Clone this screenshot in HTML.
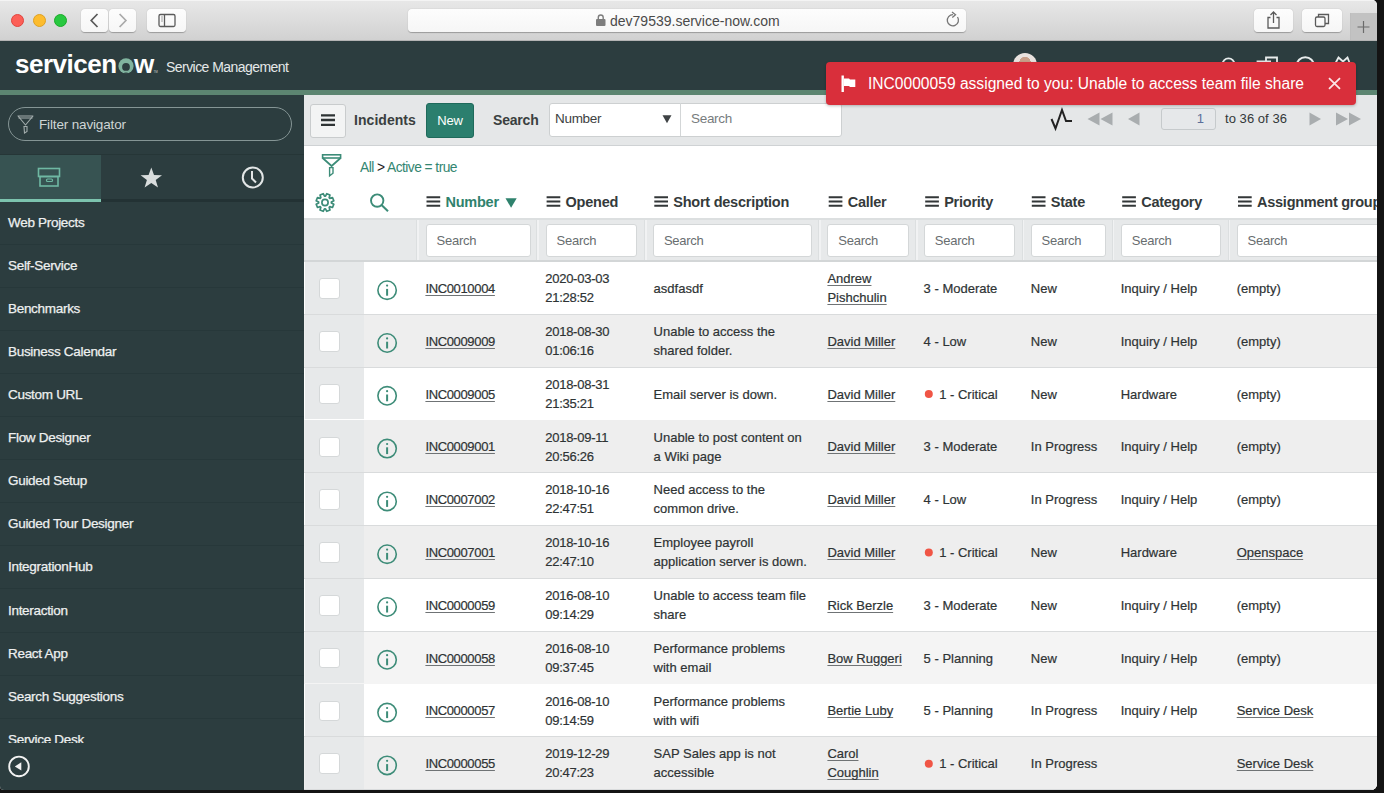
<!DOCTYPE html>
<html><head><meta charset="utf-8">
<style>
*{box-sizing:border-box;margin:0;padding:0}
html,body{width:1384px;height:793px;overflow:hidden;background:#141414;font-family:"Liberation Sans",sans-serif}
.abs{position:absolute}
svg{position:absolute;overflow:visible}
#win{position:absolute;left:0;top:0;width:1377px;height:789.5px;overflow:hidden;border-radius:0 5px 6px 4px;background:#fff}
#chrome{position:absolute;z-index:2;left:0;top:0;width:1377px;height:41px;background:linear-gradient(#e8e8e8,#d1d1d1);border-bottom:1px solid #b4b4b4;box-shadow:inset 0 1px 0 #f4f4f4}
.tl{position:absolute;top:14px;width:13px;height:13px;border-radius:50%}
.cbtn{position:absolute;top:9px;height:23px;background:linear-gradient(#fdfdfd,#f6f6f6);border-radius:4px;box-shadow:0 0.5px 1px rgba(0,0,0,.28)}
#hdr{position:absolute;left:0;top:40px;width:1377px;height:50px;background:#2c3d3f}
#hline{position:absolute;left:0;top:90px;width:1377px;height:5px;background:#5c8571}
#side{position:absolute;left:0;top:95px;width:304px;height:695px;background:#2c3d3f;overflow:hidden}
#main{position:absolute;left:304px;top:95px;width:1073px;height:695px;background:#fff;overflow:hidden}
.nav{position:absolute;left:0;width:304px;height:43px;border-bottom:1px solid #27383a;padding-left:8px;line-height:41.6px;font-size:13.5px;letter-spacing:-0.3px;color:#eef0f0;-webkit-text-stroke:0.25px #eef0f0}
</style></head><body>
<div id="win">
  <div id="chrome">
    <div class="tl" style="left:11px;background:#fc5f57;border:0.5px solid #e0443e"></div>
    <div class="tl" style="left:33px;background:#fdbc2e;border:0.5px solid #dea123"></div>
    <div class="tl" style="left:54px;background:#28c840;border:0.5px solid #1aab29"></div>
    <div class="cbtn" style="left:81px;width:27px"></div>
    <div class="cbtn" style="left:109px;width:27px"></div>
    <div class="cbtn" style="left:147px;width:39px"></div>
    <svg style="left:0;top:0" width="200" height="40">
      <path d="M97.5 14 L91.2 20.5 L97.5 27" fill="none" stroke="#585858" stroke-width="1.7"/>
      <path d="M119.6 14 L125.9 20.5 L119.6 27" fill="none" stroke="#a9a9a9" stroke-width="1.7"/>
      <rect x="159" y="14.5" width="16" height="12" rx="1.5" fill="none" stroke="#5a5a5a" stroke-width="1.3"/>
      <line x1="164.5" y1="14.5" x2="164.5" y2="26.5" stroke="#5a5a5a" stroke-width="1.3"/>
      <line x1="161" y1="17" x2="163" y2="17" stroke="#888" stroke-width="0.8"/>
      <line x1="161" y1="19" x2="163" y2="19" stroke="#888" stroke-width="0.8"/>
      <line x1="161" y1="21" x2="163" y2="21" stroke="#888" stroke-width="0.8"/>
    </svg>
    <div class="cbtn" style="left:408px;width:558px"></div>
    <svg style="left:0;top:0" width="1000" height="40">
      <rect x="596" y="19" width="9.5" height="7" rx="1" fill="#7d7d7d"/>
      <path d="M598.3 19.5 V17.5 a2.45 2.45 0 0 1 4.9 0 V19.5" fill="none" stroke="#7d7d7d" stroke-width="1.4"/>
      <path d="M957.5 17 A5.6 5.6 0 1 1 953 14.6" fill="none" stroke="#777" stroke-width="1.3"/>
      <path d="M952 12 L955.5 14.8 L952.3 17.6" fill="none" stroke="#777" stroke-width="1.3"/>
    </svg>
    <div class="abs" style="left:610px;top:13.3px;font-size:14px;line-height:17px;color:#4a4a4a;letter-spacing:0">dev79539.service-now.com</div>
    <div class="cbtn" style="left:1254px;width:39px"></div>
    <div class="cbtn" style="left:1302px;width:40px"></div>
    <div class="abs" style="left:1350px;top:13px;width:27px;height:27px;background:#c2c2c2;border-left:1px solid #bdbdbd"></div>
    <svg style="left:0;top:0" width="1384" height="40">
      <path d="M1270.5 17.5 H1268 V28 H1279 V17.5 H1276.5" fill="none" stroke="#5a5a5a" stroke-width="1.3"/>
      <path d="M1273.5 23 V12 M1270.5 15 L1273.5 12 L1276.5 15" fill="none" stroke="#5a5a5a" stroke-width="1.3"/>
      <rect x="1315.5" y="17" width="9.5" height="9.5" rx="1.5" fill="none" stroke="#5a5a5a" stroke-width="1.3"/>
      <path d="M1318.5 17 V14.5 H1328.5 V23.5 H1325" fill="none" stroke="#5a5a5a" stroke-width="1.3"/>
      <path d="M1357.5 27 H1369.5 M1363.5 21 V33" stroke="#6b6b6b" stroke-width="1.2"/>
    </svg>
  </div>
  <div id="hdr">
    <div class="abs" style="left:15px;top:9px;font-size:26px;font-weight:bold;letter-spacing:-0.5px;line-height:30px;color:#fff">servicen<span style="display:inline-block;width:17.5px"></span>w</div>
    <svg style="left:0;top:0" width="200" height="50">
      <circle cx="126" cy="25.9" r="7.6" fill="#80b49f"/><circle cx="126" cy="26.9" r="3.9" fill="#2c3d3f"/><path d="M122.6 33.8 Q126 31.2 129.4 33.8 Z" fill="#2c3d3f"/>
      <text x="153.5" y="33" font-size="3" fill="#ccc">TM</text>
    </svg>
    <div class="abs" style="left:166px;top:19.4px;font-size:14px;letter-spacing:-0.55px;line-height:17px;color:#e4e8e8">Service Management</div>
    <div class="abs" style="left:1013px;top:13px;width:24px;height:24px;border-radius:50%;background:radial-gradient(circle at 50% 40%,#c9a08a 0 30%,#e9e3df 31%)"></div>
    
    <svg style="left:0;top:0" width="1384" height="50">
      <circle cx="1228.5" cy="24.3" r="6" fill="none" stroke="#e8ecec" stroke-width="1.8"/>
      <path d="M1257.5 30 V21.5 H1271 M1266 25 V17.5 H1277 V27" fill="none" stroke="#e8ecec" stroke-width="1.8"/>
      <circle cx="1305.3" cy="26" r="8.8" fill="none" stroke="#e8ecec" stroke-width="2"/>
      <circle cx="1305.3" cy="24.5" r="2.5" fill="#e8ecec"/>
      <path d="M1335 24 L1338.5 17.5 L1343 21.5 L1347.5 17.5 L1350 24" fill="none" stroke="#e8ecec" stroke-width="1.8"/>
    </svg>
  </div>
  <div id="hline"></div>
  <div id="side">
    <div class="abs" style="left:8px;top:12px;width:284px;height:34px;border:1.2px solid #859595;border-radius:17px"></div>
    <svg style="left:0;top:0" width="304" height="60">
      <path d="M18 21 H33 L25.5 30 Z" fill="none" stroke="#a3adad" stroke-width="1.1" stroke-linejoin="round"/>
      <line x1="18.5" y1="23" x2="32.5" y2="23" stroke="#a3adad" stroke-width="1"/>
      <path d="M24 31.5 H27 V36.5 L24.5 38 Z" fill="none" stroke="#a3adad" stroke-width="1.1"/>
    </svg>
    <div class="abs" style="left:39px;top:21px;font-size:13.5px;line-height:17px;color:#cfd5d5;letter-spacing:-0.15px">Filter navigator</div>
    <div class="abs" style="left:0;top:58.5px;width:304px;height:48px;background:#2c3d3f;border-top:1px solid #263637"></div>
    <div class="abs" style="left:0;top:59.5px;width:100.5px;height:44px;background:#375352"></div>
    <div class="abs" style="left:0;top:103.5px;width:304px;height:3.5px;background:#233234"></div>
    <div class="abs" style="left:0;top:103.5px;width:100.5px;height:3.5px;background:#7cc3ae"></div>
    <svg style="left:0;top:0" width="304" height="110">
      <rect x="38.5" y="73.5" width="21" height="8" fill="none" stroke="#6fb8a3" stroke-width="1.6"/>
      <rect x="40" y="81.5" width="18" height="9.5" fill="none" stroke="#6fb8a3" stroke-width="1.6"/>
      <rect x="46.5" y="84" width="6" height="2.5" rx="1" fill="none" stroke="#6fb8a3" stroke-width="1.2"/>
      <path d="M151.3 72.5 L154 80 L162 80.3 L155.7 85.1 L158 92.5 L151.3 88 L144.6 92.5 L146.9 85.1 L140.6 80.3 L148.6 80 Z" fill="#d9dddd"/>
      <circle cx="252.8" cy="82.5" r="10" fill="none" stroke="#e2e6e6" stroke-width="2"/>
      <path d="M252 76 V83.5 L256 87.5" fill="none" stroke="#e2e6e6" stroke-width="2"/>
    </svg>
    <div class="abs" style="left:0;top:0;width:304px;height:648px;overflow:hidden">
<div class="nav" style="top:107.0px">Web Projects</div>
<div class="nav" style="top:150.1px">Self-Service</div>
<div class="nav" style="top:193.1px">Benchmarks</div>
<div class="nav" style="top:236.1px">Business Calendar</div>
<div class="nav" style="top:279.2px">Custom URL</div>
<div class="nav" style="top:322.2px">Flow Designer</div>
<div class="nav" style="top:365.3px">Guided Setup</div>
<div class="nav" style="top:408.3px">Guided Tour Designer</div>
<div class="nav" style="top:451.4px">IntegrationHub</div>
<div class="nav" style="top:494.5px">Interaction</div>
<div class="nav" style="top:537.5px">React App</div>
<div class="nav" style="top:580.5px">Search Suggestions</div>
<div class="nav" style="top:623.6px">Service Desk</div>
    </div>
    <svg style="left:0;top:0" width="304" height="695">
      <circle cx="19" cy="671.4" r="9.8" fill="none" stroke="#f2f2f2" stroke-width="1.9"/>
      <path d="M14.8 671.4 L21.3 667.3 V675.5 Z" fill="#f2f2f2"/>
    </svg>
  </div>
  <div id="main">
<div class="abs" style="left:0;top:0;width:1073px;height:51px;background:#e5e7e8;border-bottom:1px solid #cfd2d4"></div>
<div class="abs" style="left:6px;top:8.5px;width:35.5px;height:34px;background:#f3f4f4;border:1px solid #c9cccd;border-radius:3px"></div>
<svg style="left:0;top:0" width="200" height="50"><path d="M17 20.3 H31 M17 25 H31 M17 29.8 H31" stroke="#2f3435" stroke-width="2.3"/></svg>
<div class="abs" style="left:50px;top:17px;font-size:14px;font-weight:bold;line-height:16px;color:#3a3f40;letter-spacing:0.05px">Incidents</div>
<div class="abs" style="left:122px;top:8px;width:48px;height:35px;background:#2b7f6e;border:1px solid #1f6a5b;border-radius:3px;color:#fff;font-size:13px;line-height:33px;text-align:center;letter-spacing:-0.2px">New</div>
<div class="abs" style="left:189px;top:17px;font-size:14px;font-weight:bold;line-height:16px;color:#3a3f40;letter-spacing:-0.2px">Search</div>
<div class="abs" style="left:244.5px;top:7.5px;width:293px;height:34px;background:#fff;border:1px solid #cdd0d1;border-radius:3px"></div>
<div class="abs" style="left:376px;top:8px;width:1px;height:33px;background:#d3d6d7"></div>
<div class="abs" style="left:251px;top:16px;font-size:13.5px;line-height:16px;color:#3d4142;letter-spacing:-0.3px">Number</div>
<svg style="left:0;top:0" width="1073" height="50"><path d="M358.5 20.200000000000003 H367.5 L363 28.200000000000003 Z" fill="#3f4345"/></svg>
<div class="abs" style="left:387px;top:16px;font-size:13.5px;line-height:16px;color:#777c7e;letter-spacing:-0.3px">Search</div>
<svg style="left:0;top:0" width="1073" height="50">
<path d="M747.5 24 L751.5 33.5 L758 15 L762 26 H768" fill="none" stroke="#222" stroke-width="2"/>
<path d="M783.5 24 L795.5 17.5 V30.5 Z M796.5 24 L808.5 17.5 V30.5 Z" fill="#a9adaf"/>
<path d="M824 24 L835.5 17.5 V30.5 Z" fill="#a9adaf"/>
<path d="M1017 24 L1005.5 17.5 V30.5 Z" fill="#a9adaf"/>
<path d="M1044 24 L1032 17.5 V30.5 Z M1057 24 L1045 17.5 V30.5 Z" fill="#a9adaf"/>
</svg>
<div class="abs" style="left:857px;top:13px;width:55px;height:21.5px;background:#e6e8ea;border:1px solid #c6cacc;border-radius:3px;font-size:13px;line-height:19.5px;text-align:right;padding-right:11px;color:#5b6f9a">1</div>
<div class="abs" style="left:921px;top:16px;font-size:13px;line-height:16px;color:#333839;letter-spacing:0.05px">to 36 of 36</div>
<svg style="left:0;top:0" width="1073" height="200">
<rect x="18.600000000000023" y="59.80000000000001" width="18" height="3.2" fill="none" stroke="#3c8c78" stroke-width="1.6"/>
<path d="M18.600000000000023 63 L27.600000000000023 71 L36.60000000000002 63" fill="none" stroke="#3c8c78" stroke-width="1.7" stroke-linejoin="round"/>
<path d="M25.600000000000023 72.6 H29 V78.19999999999999 L25.600000000000023 80.80000000000001 Z" fill="none" stroke="#3c8c78" stroke-width="1.4"/>
</svg>
<div class="abs" style="left:56px;top:64.80000000000001px;font-size:13.8px;line-height:16px;color:#338671;letter-spacing:-0.55px;white-space:pre">All <span style="color:#222">&gt;</span> Active = true</div>
<div class="abs" style="left:0;top:123px;width:1073px;height:2px;background:#dcdfe0"></div>
<svg style="left:0;top:0" width="1073" height="200">
<polygon points="21.50,101.12 22.79,98.68 25.97,100.00 25.16,102.63 25.87,103.34 28.50,102.53 29.82,105.71 27.38,107.00 27.38,108.00 29.82,109.29 28.50,112.47 25.87,111.66 25.16,112.37 25.97,115.00 22.79,116.32 21.50,113.88 20.50,113.88 19.21,116.32 16.03,115.00 16.84,112.37 16.13,111.66 13.50,112.47 12.18,109.29 14.62,108.00 14.62,107.00 12.18,105.71 13.50,102.53 16.13,103.34 16.84,102.63 16.03,100.00 19.21,98.68 20.50,101.12" fill="none" stroke="#3c8c78" stroke-width="1.7" stroke-linejoin="round"/>
<circle cx="21" cy="107.5" r="3.1" fill="none" stroke="#3c8c78" stroke-width="1.7"/>
<circle cx="73.19999999999999" cy="105.6" r="6.2" fill="none" stroke="#3c8c78" stroke-width="1.9"/>
<line x1="77.80000000000001" y1="110.19999999999999" x2="84" y2="116.19999999999999" stroke="#3c8c78" stroke-width="2"/>
</svg>
<div class="abs" style="left:0;top:125px;width:1073px;height:41px;background:#e7e9ea"></div>
<div class="abs" style="left:0;top:165px;width:1073px;height:2px;background:#d3d6d7"></div>
<div class="abs" style="left:112px;top:125px;width:2.5px;height:40px;background:#f1f2f3;border-left:1px solid #dcdfe0"></div>
<div class="abs" style="left:121.5px;top:128.8px;width:105.0px;height:33.6px;background:#fff;border:1px solid #d4d7d8;border-radius:3px;font-size:13px;line-height:31px;padding-left:10px;color:#686d6f;letter-spacing:-0.25px">Search</div>
<div class="abs" style="left:141.5px;top:98.9px;font-size:14.5px;font-weight:bold;line-height:16px;color:#2f826d;letter-spacing:-0.25px;white-space:nowrap">Number</div>
<div class="abs" style="left:232px;top:125px;width:2.5px;height:40px;background:#f1f2f3;border-left:1px solid #dcdfe0"></div>
<div class="abs" style="left:241.60000000000002px;top:128.8px;width:91.69999999999993px;height:33.6px;background:#fff;border:1px solid #d4d7d8;border-radius:3px;font-size:13px;line-height:31px;padding-left:10px;color:#686d6f;letter-spacing:-0.25px">Search</div>
<div class="abs" style="left:261.59999999999997px;top:98.9px;font-size:14.5px;font-weight:bold;line-height:16px;color:#343a3b;letter-spacing:-0.25px;white-space:nowrap">Opened</div>
<div class="abs" style="left:340px;top:125px;width:2.5px;height:40px;background:#f1f2f3;border-left:1px solid #dcdfe0"></div>
<div class="abs" style="left:348.9px;top:128.8px;width:158.89999999999998px;height:33.6px;background:#fff;border:1px solid #d4d7d8;border-radius:3px;font-size:13px;line-height:31px;padding-left:10px;color:#686d6f;letter-spacing:-0.25px">Search</div>
<div class="abs" style="left:369.3px;top:98.9px;font-size:14.5px;font-weight:bold;line-height:16px;color:#343a3b;letter-spacing:-0.25px;white-space:nowrap">Short description</div>
<div class="abs" style="left:514.2px;top:125px;width:2.5px;height:40px;background:#f1f2f3;border-left:1px solid #dcdfe0"></div>
<div class="abs" style="left:523.3px;top:128.8px;width:81.30000000000007px;height:33.6px;background:#fff;border:1px solid #d4d7d8;border-radius:3px;font-size:13px;line-height:31px;padding-left:10px;color:#686d6f;letter-spacing:-0.25px">Search</div>
<div class="abs" style="left:543.6999999999999px;top:98.9px;font-size:14.5px;font-weight:bold;line-height:16px;color:#343a3b;letter-spacing:-0.25px;white-space:nowrap">Caller</div>
<div class="abs" style="left:611.2px;top:125px;width:2.5px;height:40px;background:#f1f2f3;border-left:1px solid #dcdfe0"></div>
<div class="abs" style="left:619.8px;top:128.8px;width:91.5px;height:33.6px;background:#fff;border:1px solid #d4d7d8;border-radius:3px;font-size:13px;line-height:31px;padding-left:10px;color:#686d6f;letter-spacing:-0.25px">Search</div>
<div class="abs" style="left:640.1999999999999px;top:98.9px;font-size:14.5px;font-weight:bold;line-height:16px;color:#343a3b;letter-spacing:-0.25px;white-space:nowrap">Priority</div>
<div class="abs" style="left:717.9px;top:125px;width:2.5px;height:40px;background:#f1f2f3;border-left:1px solid #dcdfe0"></div>
<div class="abs" style="left:726.5px;top:128.8px;width:75.0px;height:33.6px;background:#fff;border:1px solid #d4d7d8;border-radius:3px;font-size:13px;line-height:31px;padding-left:10px;color:#686d6f;letter-spacing:-0.25px">Search</div>
<div class="abs" style="left:746.8px;top:98.9px;font-size:14.5px;font-weight:bold;line-height:16px;color:#343a3b;letter-spacing:-0.25px;white-space:nowrap">State</div>
<div class="abs" style="left:807.9000000000001px;top:125px;width:2.5px;height:40px;background:#f1f2f3;border-left:1px solid #dcdfe0"></div>
<div class="abs" style="left:816.8px;top:128.8px;width:100.5px;height:33.6px;background:#fff;border:1px solid #d4d7d8;border-radius:3px;font-size:13px;line-height:31px;padding-left:10px;color:#686d6f;letter-spacing:-0.25px">Search</div>
<div class="abs" style="left:837.2px;top:98.9px;font-size:14.5px;font-weight:bold;line-height:16px;color:#343a3b;letter-spacing:-0.25px;white-space:nowrap">Category</div>
<div class="abs" style="left:923.5px;top:125px;width:2.5px;height:40px;background:#f1f2f3;border-left:1px solid #dcdfe0"></div>
<div class="abs" style="left:932.5999999999999px;top:128.8px;width:153.4000000000001px;height:33.6px;background:#fff;border:1px solid #d4d7d8;border-radius:3px;font-size:13px;line-height:31px;padding-left:10px;color:#686d6f;letter-spacing:-0.25px">Search</div>
<div class="abs" style="left:953.0px;top:98.9px;font-size:14.5px;font-weight:bold;line-height:16px;color:#343a3b;letter-spacing:-0.25px;white-space:nowrap">Assignment group</div>
<svg style="left:0;top:0" width="1073" height="200"><path d="M122.49999999999999 102.30000000000001 H136.2 M122.49999999999999 106.5 H136.2 M122.49999999999999 110.69999999999999 H136.2" stroke="#333738" stroke-width="2.1"/><path d="M242.59999999999997 102.30000000000001 H256.29999999999995 M242.59999999999997 106.5 H256.29999999999995 M242.59999999999997 110.69999999999999 H256.29999999999995" stroke="#333738" stroke-width="2.1"/><path d="M350.3 102.30000000000001 H364 M350.3 106.5 H364 M350.3 110.69999999999999 H364" stroke="#333738" stroke-width="2.1"/><path d="M524.6999999999999 102.30000000000001 H538.4 M524.6999999999999 106.5 H538.4 M524.6999999999999 110.69999999999999 H538.4" stroke="#333738" stroke-width="2.1"/><path d="M621.1999999999999 102.30000000000001 H634.9 M621.1999999999999 106.5 H634.9 M621.1999999999999 110.69999999999999 H634.9" stroke="#333738" stroke-width="2.1"/><path d="M727.8 102.30000000000001 H741.5 M727.8 106.5 H741.5 M727.8 110.69999999999999 H741.5" stroke="#333738" stroke-width="2.1"/><path d="M818.2 102.30000000000001 H831.9000000000001 M818.2 106.5 H831.9000000000001 M818.2 110.69999999999999 H831.9000000000001" stroke="#333738" stroke-width="2.1"/><path d="M934.0 102.30000000000001 H947.7 M934.0 106.5 H947.7 M934.0 110.69999999999999 H947.7" stroke="#333738" stroke-width="2.1"/><path d="M201.5 103.30000000000001 H212.70000000000005 L207.10000000000002 112.80000000000001 Z" fill="#2f826d"/></svg>
<div class="abs" style="left:0;top:167.0px;width:1073px;height:53.0px;background:#fff;border-bottom:1px solid #d9dbdc"></div>
<div class="abs" style="left:1px;top:167.0px;width:59px;height:51.8px;background:#e7e9ea"></div>
<div class="abs" style="left:15.199999999999989px;top:183.2px;width:20.6px;height:20.6px;background:#fff;border:1px solid #d5d8d9;border-radius:3px"></div>
<div class="abs" style="left:121.39999999999998px;top:185.9px;font-size:13px;line-height:16px;color:#2e3334;-webkit-text-stroke:0.2px #2e3334;letter-spacing:-0.35px;white-space:nowrap;text-decoration:underline;text-decoration-color:#6f7375;text-decoration-thickness:1px;text-underline-offset:1.6px;">INC0010004</div>
<div class="abs" style="left:241.20000000000005px;top:174.2px;font-size:13px;line-height:19px;color:#2e3334;-webkit-text-stroke:0.2px #2e3334;letter-spacing:-0.25px;white-space:nowrap;">2020-03-03<br>21:28:52</div>
<div class="abs" style="left:349.6px;top:185.9px;font-size:13px;line-height:16px;color:#2e3334;-webkit-text-stroke:0.2px #2e3334;letter-spacing:0px;white-space:nowrap;">asdfasdf</div>
<div class="abs" style="left:523.4px;top:174.2px;font-size:13px;line-height:19px;color:#2e3334;-webkit-text-stroke:0.2px #2e3334;letter-spacing:0px;white-space:nowrap;text-decoration:underline;text-decoration-color:#6f7375;text-decoration-thickness:1px;text-underline-offset:1.6px;">Andrew<br>Pishchulin</div>
<div class="abs" style="left:619.6px;top:185.9px;font-size:13px;line-height:16px;color:#2e3334;-webkit-text-stroke:0.2px #2e3334;letter-spacing:0px;white-space:nowrap;">3 - Moderate</div>
<div class="abs" style="left:726.8px;top:185.9px;font-size:13px;line-height:16px;color:#2e3334;-webkit-text-stroke:0.2px #2e3334;letter-spacing:0px;white-space:nowrap;">New</div>
<div class="abs" style="left:816.7px;top:185.9px;font-size:13px;line-height:16px;color:#2e3334;-webkit-text-stroke:0.2px #2e3334;letter-spacing:0px;white-space:nowrap;">Inquiry / Help</div>
<div class="abs" style="left:932.7px;top:185.9px;font-size:13px;line-height:16px;color:#2e3334;-webkit-text-stroke:0.2px #2e3334;letter-spacing:0px;white-space:nowrap;">(empty)</div>
<div class="abs" style="left:0;top:219.8px;width:1073px;height:53.0px;background:#eeeeee;border-bottom:1px solid #d9dbdc"></div>
<div class="abs" style="left:1px;top:219.8px;width:59px;height:51.8px;background:#e7e9ea"></div>
<div class="abs" style="left:15.199999999999989px;top:236.0px;width:20.6px;height:20.6px;background:#fff;border:1px solid #d5d8d9;border-radius:3px"></div>
<div class="abs" style="left:121.39999999999998px;top:238.7px;font-size:13px;line-height:16px;color:#2e3334;-webkit-text-stroke:0.2px #2e3334;letter-spacing:-0.35px;white-space:nowrap;text-decoration:underline;text-decoration-color:#6f7375;text-decoration-thickness:1px;text-underline-offset:1.6px;">INC0009009</div>
<div class="abs" style="left:241.20000000000005px;top:227.0px;font-size:13px;line-height:19px;color:#2e3334;-webkit-text-stroke:0.2px #2e3334;letter-spacing:-0.25px;white-space:nowrap;">2018-08-30<br>01:06:16</div>
<div class="abs" style="left:349.6px;top:227.0px;font-size:13px;line-height:19px;color:#2e3334;-webkit-text-stroke:0.2px #2e3334;letter-spacing:0px;white-space:nowrap;">Unable to access the<br>shared folder.</div>
<div class="abs" style="left:523.4px;top:238.7px;font-size:13px;line-height:16px;color:#2e3334;-webkit-text-stroke:0.2px #2e3334;letter-spacing:0px;white-space:nowrap;text-decoration:underline;text-decoration-color:#6f7375;text-decoration-thickness:1px;text-underline-offset:1.6px;">David Miller</div>
<div class="abs" style="left:619.6px;top:238.7px;font-size:13px;line-height:16px;color:#2e3334;-webkit-text-stroke:0.2px #2e3334;letter-spacing:0px;white-space:nowrap;">4 - Low</div>
<div class="abs" style="left:726.8px;top:238.7px;font-size:13px;line-height:16px;color:#2e3334;-webkit-text-stroke:0.2px #2e3334;letter-spacing:0px;white-space:nowrap;">New</div>
<div class="abs" style="left:816.7px;top:238.7px;font-size:13px;line-height:16px;color:#2e3334;-webkit-text-stroke:0.2px #2e3334;letter-spacing:0px;white-space:nowrap;">Inquiry / Help</div>
<div class="abs" style="left:932.7px;top:238.7px;font-size:13px;line-height:16px;color:#2e3334;-webkit-text-stroke:0.2px #2e3334;letter-spacing:0px;white-space:nowrap;">(empty)</div>
<div class="abs" style="left:0;top:272.6px;width:1073px;height:53.0px;background:#fff;border-bottom:1px solid #d9dbdc"></div>
<div class="abs" style="left:1px;top:272.6px;width:59px;height:51.8px;background:#e7e9ea"></div>
<div class="abs" style="left:15.199999999999989px;top:288.8px;width:20.6px;height:20.6px;background:#fff;border:1px solid #d5d8d9;border-radius:3px"></div>
<div class="abs" style="left:121.39999999999998px;top:291.5px;font-size:13px;line-height:16px;color:#2e3334;-webkit-text-stroke:0.2px #2e3334;letter-spacing:-0.35px;white-space:nowrap;text-decoration:underline;text-decoration-color:#6f7375;text-decoration-thickness:1px;text-underline-offset:1.6px;">INC0009005</div>
<div class="abs" style="left:241.20000000000005px;top:279.8px;font-size:13px;line-height:19px;color:#2e3334;-webkit-text-stroke:0.2px #2e3334;letter-spacing:-0.25px;white-space:nowrap;">2018-08-31<br>21:35:21</div>
<div class="abs" style="left:349.6px;top:291.5px;font-size:13px;line-height:16px;color:#2e3334;-webkit-text-stroke:0.2px #2e3334;letter-spacing:0px;white-space:nowrap;">Email server is down.</div>
<div class="abs" style="left:523.4px;top:291.5px;font-size:13px;line-height:16px;color:#2e3334;-webkit-text-stroke:0.2px #2e3334;letter-spacing:0px;white-space:nowrap;text-decoration:underline;text-decoration-color:#6f7375;text-decoration-thickness:1px;text-underline-offset:1.6px;">David Miller</div>
<div class="abs" style="left:635.2px;top:291.5px;font-size:13px;line-height:16px;color:#2e3334;-webkit-text-stroke:0.2px #2e3334;letter-spacing:0px;white-space:nowrap;">1 - Critical</div>
<div class="abs" style="left:726.8px;top:291.5px;font-size:13px;line-height:16px;color:#2e3334;-webkit-text-stroke:0.2px #2e3334;letter-spacing:0px;white-space:nowrap;">New</div>
<div class="abs" style="left:816.7px;top:291.5px;font-size:13px;line-height:16px;color:#2e3334;-webkit-text-stroke:0.2px #2e3334;letter-spacing:0px;white-space:nowrap;">Hardware</div>
<div class="abs" style="left:932.7px;top:291.5px;font-size:13px;line-height:16px;color:#2e3334;-webkit-text-stroke:0.2px #2e3334;letter-spacing:0px;white-space:nowrap;">(empty)</div>
<div class="abs" style="left:0;top:325.4px;width:1073px;height:53.0px;background:#eeeeee;border-bottom:1px solid #d9dbdc"></div>
<div class="abs" style="left:1px;top:325.4px;width:59px;height:51.8px;background:#e7e9ea"></div>
<div class="abs" style="left:15.199999999999989px;top:341.6px;width:20.6px;height:20.6px;background:#fff;border:1px solid #d5d8d9;border-radius:3px"></div>
<div class="abs" style="left:121.39999999999998px;top:344.3px;font-size:13px;line-height:16px;color:#2e3334;-webkit-text-stroke:0.2px #2e3334;letter-spacing:-0.35px;white-space:nowrap;text-decoration:underline;text-decoration-color:#6f7375;text-decoration-thickness:1px;text-underline-offset:1.6px;">INC0009001</div>
<div class="abs" style="left:241.20000000000005px;top:332.6px;font-size:13px;line-height:19px;color:#2e3334;-webkit-text-stroke:0.2px #2e3334;letter-spacing:-0.25px;white-space:nowrap;">2018-09-11<br>20:56:26</div>
<div class="abs" style="left:349.6px;top:332.6px;font-size:13px;line-height:19px;color:#2e3334;-webkit-text-stroke:0.2px #2e3334;letter-spacing:0px;white-space:nowrap;">Unable to post content on<br>a Wiki page</div>
<div class="abs" style="left:523.4px;top:344.3px;font-size:13px;line-height:16px;color:#2e3334;-webkit-text-stroke:0.2px #2e3334;letter-spacing:0px;white-space:nowrap;text-decoration:underline;text-decoration-color:#6f7375;text-decoration-thickness:1px;text-underline-offset:1.6px;">David Miller</div>
<div class="abs" style="left:619.6px;top:344.3px;font-size:13px;line-height:16px;color:#2e3334;-webkit-text-stroke:0.2px #2e3334;letter-spacing:0px;white-space:nowrap;">3 - Moderate</div>
<div class="abs" style="left:726.8px;top:344.3px;font-size:13px;line-height:16px;color:#2e3334;-webkit-text-stroke:0.2px #2e3334;letter-spacing:0px;white-space:nowrap;">In Progress</div>
<div class="abs" style="left:816.7px;top:344.3px;font-size:13px;line-height:16px;color:#2e3334;-webkit-text-stroke:0.2px #2e3334;letter-spacing:0px;white-space:nowrap;">Inquiry / Help</div>
<div class="abs" style="left:932.7px;top:344.3px;font-size:13px;line-height:16px;color:#2e3334;-webkit-text-stroke:0.2px #2e3334;letter-spacing:0px;white-space:nowrap;">(empty)</div>
<div class="abs" style="left:0;top:378.2px;width:1073px;height:53.0px;background:#fff;border-bottom:1px solid #d9dbdc"></div>
<div class="abs" style="left:1px;top:378.2px;width:59px;height:51.8px;background:#e7e9ea"></div>
<div class="abs" style="left:15.199999999999989px;top:394.4px;width:20.6px;height:20.6px;background:#fff;border:1px solid #d5d8d9;border-radius:3px"></div>
<div class="abs" style="left:121.39999999999998px;top:397.1px;font-size:13px;line-height:16px;color:#2e3334;-webkit-text-stroke:0.2px #2e3334;letter-spacing:-0.35px;white-space:nowrap;text-decoration:underline;text-decoration-color:#6f7375;text-decoration-thickness:1px;text-underline-offset:1.6px;">INC0007002</div>
<div class="abs" style="left:241.20000000000005px;top:385.4px;font-size:13px;line-height:19px;color:#2e3334;-webkit-text-stroke:0.2px #2e3334;letter-spacing:-0.25px;white-space:nowrap;">2018-10-16<br>22:47:51</div>
<div class="abs" style="left:349.6px;top:385.4px;font-size:13px;line-height:19px;color:#2e3334;-webkit-text-stroke:0.2px #2e3334;letter-spacing:0px;white-space:nowrap;">Need access to the<br>common drive.</div>
<div class="abs" style="left:523.4px;top:397.1px;font-size:13px;line-height:16px;color:#2e3334;-webkit-text-stroke:0.2px #2e3334;letter-spacing:0px;white-space:nowrap;text-decoration:underline;text-decoration-color:#6f7375;text-decoration-thickness:1px;text-underline-offset:1.6px;">David Miller</div>
<div class="abs" style="left:619.6px;top:397.1px;font-size:13px;line-height:16px;color:#2e3334;-webkit-text-stroke:0.2px #2e3334;letter-spacing:0px;white-space:nowrap;">4 - Low</div>
<div class="abs" style="left:726.8px;top:397.1px;font-size:13px;line-height:16px;color:#2e3334;-webkit-text-stroke:0.2px #2e3334;letter-spacing:0px;white-space:nowrap;">In Progress</div>
<div class="abs" style="left:816.7px;top:397.1px;font-size:13px;line-height:16px;color:#2e3334;-webkit-text-stroke:0.2px #2e3334;letter-spacing:0px;white-space:nowrap;">Inquiry / Help</div>
<div class="abs" style="left:932.7px;top:397.1px;font-size:13px;line-height:16px;color:#2e3334;-webkit-text-stroke:0.2px #2e3334;letter-spacing:0px;white-space:nowrap;">(empty)</div>
<div class="abs" style="left:0;top:431.0px;width:1073px;height:53.0px;background:#eeeeee;border-bottom:1px solid #d9dbdc"></div>
<div class="abs" style="left:1px;top:431.0px;width:59px;height:51.8px;background:#e7e9ea"></div>
<div class="abs" style="left:15.199999999999989px;top:447.2px;width:20.6px;height:20.6px;background:#fff;border:1px solid #d5d8d9;border-radius:3px"></div>
<div class="abs" style="left:121.39999999999998px;top:449.9px;font-size:13px;line-height:16px;color:#2e3334;-webkit-text-stroke:0.2px #2e3334;letter-spacing:-0.35px;white-space:nowrap;text-decoration:underline;text-decoration-color:#6f7375;text-decoration-thickness:1px;text-underline-offset:1.6px;">INC0007001</div>
<div class="abs" style="left:241.20000000000005px;top:438.2px;font-size:13px;line-height:19px;color:#2e3334;-webkit-text-stroke:0.2px #2e3334;letter-spacing:-0.25px;white-space:nowrap;">2018-10-16<br>22:47:10</div>
<div class="abs" style="left:349.6px;top:438.2px;font-size:13px;line-height:19px;color:#2e3334;-webkit-text-stroke:0.2px #2e3334;letter-spacing:0px;white-space:nowrap;">Employee payroll<br>application server is down.</div>
<div class="abs" style="left:523.4px;top:449.9px;font-size:13px;line-height:16px;color:#2e3334;-webkit-text-stroke:0.2px #2e3334;letter-spacing:0px;white-space:nowrap;text-decoration:underline;text-decoration-color:#6f7375;text-decoration-thickness:1px;text-underline-offset:1.6px;">David Miller</div>
<div class="abs" style="left:635.2px;top:449.9px;font-size:13px;line-height:16px;color:#2e3334;-webkit-text-stroke:0.2px #2e3334;letter-spacing:0px;white-space:nowrap;">1 - Critical</div>
<div class="abs" style="left:726.8px;top:449.9px;font-size:13px;line-height:16px;color:#2e3334;-webkit-text-stroke:0.2px #2e3334;letter-spacing:0px;white-space:nowrap;">New</div>
<div class="abs" style="left:816.7px;top:449.9px;font-size:13px;line-height:16px;color:#2e3334;-webkit-text-stroke:0.2px #2e3334;letter-spacing:0px;white-space:nowrap;">Hardware</div>
<div class="abs" style="left:932.7px;top:449.9px;font-size:13px;line-height:16px;color:#2e3334;-webkit-text-stroke:0.2px #2e3334;letter-spacing:0px;white-space:nowrap;text-decoration:underline;text-decoration-color:#6f7375;text-decoration-thickness:1px;text-underline-offset:1.6px;">Openspace</div>
<div class="abs" style="left:0;top:483.8px;width:1073px;height:53.0px;background:#fff;border-bottom:1px solid #d9dbdc"></div>
<div class="abs" style="left:1px;top:483.8px;width:59px;height:51.8px;background:#e7e9ea"></div>
<div class="abs" style="left:15.199999999999989px;top:500.0px;width:20.6px;height:20.6px;background:#fff;border:1px solid #d5d8d9;border-radius:3px"></div>
<div class="abs" style="left:121.39999999999998px;top:502.7px;font-size:13px;line-height:16px;color:#2e3334;-webkit-text-stroke:0.2px #2e3334;letter-spacing:-0.35px;white-space:nowrap;text-decoration:underline;text-decoration-color:#6f7375;text-decoration-thickness:1px;text-underline-offset:1.6px;">INC0000059</div>
<div class="abs" style="left:241.20000000000005px;top:491.0px;font-size:13px;line-height:19px;color:#2e3334;-webkit-text-stroke:0.2px #2e3334;letter-spacing:-0.25px;white-space:nowrap;">2016-08-10<br>09:14:29</div>
<div class="abs" style="left:349.6px;top:491.0px;font-size:13px;line-height:19px;color:#2e3334;-webkit-text-stroke:0.2px #2e3334;letter-spacing:0px;white-space:nowrap;">Unable to access team file<br>share</div>
<div class="abs" style="left:523.4px;top:502.7px;font-size:13px;line-height:16px;color:#2e3334;-webkit-text-stroke:0.2px #2e3334;letter-spacing:0px;white-space:nowrap;text-decoration:underline;text-decoration-color:#6f7375;text-decoration-thickness:1px;text-underline-offset:1.6px;">Rick Berzle</div>
<div class="abs" style="left:619.6px;top:502.7px;font-size:13px;line-height:16px;color:#2e3334;-webkit-text-stroke:0.2px #2e3334;letter-spacing:0px;white-space:nowrap;">3 - Moderate</div>
<div class="abs" style="left:726.8px;top:502.7px;font-size:13px;line-height:16px;color:#2e3334;-webkit-text-stroke:0.2px #2e3334;letter-spacing:0px;white-space:nowrap;">New</div>
<div class="abs" style="left:816.7px;top:502.7px;font-size:13px;line-height:16px;color:#2e3334;-webkit-text-stroke:0.2px #2e3334;letter-spacing:0px;white-space:nowrap;">Inquiry / Help</div>
<div class="abs" style="left:932.7px;top:502.7px;font-size:13px;line-height:16px;color:#2e3334;-webkit-text-stroke:0.2px #2e3334;letter-spacing:0px;white-space:nowrap;">(empty)</div>
<div class="abs" style="left:0;top:536.6px;width:1073px;height:53.0px;background:#f4f4f4;border-bottom:1px solid #d9dbdc"></div>
<div class="abs" style="left:1px;top:536.6px;width:59px;height:51.8px;background:#e7e9ea"></div>
<div class="abs" style="left:15.199999999999989px;top:552.8px;width:20.6px;height:20.6px;background:#fff;border:1px solid #d5d8d9;border-radius:3px"></div>
<div class="abs" style="left:121.39999999999998px;top:555.5px;font-size:13px;line-height:16px;color:#2e3334;-webkit-text-stroke:0.2px #2e3334;letter-spacing:-0.35px;white-space:nowrap;text-decoration:underline;text-decoration-color:#6f7375;text-decoration-thickness:1px;text-underline-offset:1.6px;">INC0000058</div>
<div class="abs" style="left:241.20000000000005px;top:543.8px;font-size:13px;line-height:19px;color:#2e3334;-webkit-text-stroke:0.2px #2e3334;letter-spacing:-0.25px;white-space:nowrap;">2016-08-10<br>09:37:45</div>
<div class="abs" style="left:349.6px;top:543.8px;font-size:13px;line-height:19px;color:#2e3334;-webkit-text-stroke:0.2px #2e3334;letter-spacing:0px;white-space:nowrap;">Performance problems<br>with email</div>
<div class="abs" style="left:523.4px;top:555.5px;font-size:13px;line-height:16px;color:#2e3334;-webkit-text-stroke:0.2px #2e3334;letter-spacing:0px;white-space:nowrap;text-decoration:underline;text-decoration-color:#6f7375;text-decoration-thickness:1px;text-underline-offset:1.6px;">Bow Ruggeri</div>
<div class="abs" style="left:619.6px;top:555.5px;font-size:13px;line-height:16px;color:#2e3334;-webkit-text-stroke:0.2px #2e3334;letter-spacing:0px;white-space:nowrap;">5 - Planning</div>
<div class="abs" style="left:726.8px;top:555.5px;font-size:13px;line-height:16px;color:#2e3334;-webkit-text-stroke:0.2px #2e3334;letter-spacing:0px;white-space:nowrap;">New</div>
<div class="abs" style="left:816.7px;top:555.5px;font-size:13px;line-height:16px;color:#2e3334;-webkit-text-stroke:0.2px #2e3334;letter-spacing:0px;white-space:nowrap;">Inquiry / Help</div>
<div class="abs" style="left:932.7px;top:555.5px;font-size:13px;line-height:16px;color:#2e3334;-webkit-text-stroke:0.2px #2e3334;letter-spacing:0px;white-space:nowrap;">(empty)</div>
<div class="abs" style="left:0;top:589.4px;width:1073px;height:53.0px;background:#fff;border-bottom:1px solid #d9dbdc"></div>
<div class="abs" style="left:1px;top:589.4px;width:59px;height:51.8px;background:#e7e9ea"></div>
<div class="abs" style="left:15.199999999999989px;top:605.6px;width:20.6px;height:20.6px;background:#fff;border:1px solid #d5d8d9;border-radius:3px"></div>
<div class="abs" style="left:121.39999999999998px;top:608.3px;font-size:13px;line-height:16px;color:#2e3334;-webkit-text-stroke:0.2px #2e3334;letter-spacing:-0.35px;white-space:nowrap;text-decoration:underline;text-decoration-color:#6f7375;text-decoration-thickness:1px;text-underline-offset:1.6px;">INC0000057</div>
<div class="abs" style="left:241.20000000000005px;top:596.6px;font-size:13px;line-height:19px;color:#2e3334;-webkit-text-stroke:0.2px #2e3334;letter-spacing:-0.25px;white-space:nowrap;">2016-08-10<br>09:14:59</div>
<div class="abs" style="left:349.6px;top:596.6px;font-size:13px;line-height:19px;color:#2e3334;-webkit-text-stroke:0.2px #2e3334;letter-spacing:0px;white-space:nowrap;">Performance problems<br>with wifi</div>
<div class="abs" style="left:523.4px;top:608.3px;font-size:13px;line-height:16px;color:#2e3334;-webkit-text-stroke:0.2px #2e3334;letter-spacing:0px;white-space:nowrap;text-decoration:underline;text-decoration-color:#6f7375;text-decoration-thickness:1px;text-underline-offset:1.6px;">Bertie Luby</div>
<div class="abs" style="left:619.6px;top:608.3px;font-size:13px;line-height:16px;color:#2e3334;-webkit-text-stroke:0.2px #2e3334;letter-spacing:0px;white-space:nowrap;">5 - Planning</div>
<div class="abs" style="left:726.8px;top:608.3px;font-size:13px;line-height:16px;color:#2e3334;-webkit-text-stroke:0.2px #2e3334;letter-spacing:0px;white-space:nowrap;">In Progress</div>
<div class="abs" style="left:816.7px;top:608.3px;font-size:13px;line-height:16px;color:#2e3334;-webkit-text-stroke:0.2px #2e3334;letter-spacing:0px;white-space:nowrap;">Inquiry / Help</div>
<div class="abs" style="left:932.7px;top:608.3px;font-size:13px;line-height:16px;color:#2e3334;-webkit-text-stroke:0.2px #2e3334;letter-spacing:0px;white-space:nowrap;text-decoration:underline;text-decoration-color:#6f7375;text-decoration-thickness:1px;text-underline-offset:1.6px;">Service Desk</div>
<div class="abs" style="left:0;top:642.2px;width:1073px;height:53.0px;background:#eeeeee;border-bottom:1px solid #d9dbdc"></div>
<div class="abs" style="left:1px;top:642.2px;width:59px;height:51.8px;background:#e7e9ea"></div>
<div class="abs" style="left:15.199999999999989px;top:658.4px;width:20.6px;height:20.6px;background:#fff;border:1px solid #d5d8d9;border-radius:3px"></div>
<div class="abs" style="left:121.39999999999998px;top:661.1px;font-size:13px;line-height:16px;color:#2e3334;-webkit-text-stroke:0.2px #2e3334;letter-spacing:-0.35px;white-space:nowrap;text-decoration:underline;text-decoration-color:#6f7375;text-decoration-thickness:1px;text-underline-offset:1.6px;">INC0000055</div>
<div class="abs" style="left:241.20000000000005px;top:649.4px;font-size:13px;line-height:19px;color:#2e3334;-webkit-text-stroke:0.2px #2e3334;letter-spacing:-0.25px;white-space:nowrap;">2019-12-29<br>20:47:23</div>
<div class="abs" style="left:349.6px;top:649.4px;font-size:13px;line-height:19px;color:#2e3334;-webkit-text-stroke:0.2px #2e3334;letter-spacing:0px;white-space:nowrap;">SAP Sales app is not<br>accessible</div>
<div class="abs" style="left:523.4px;top:649.4px;font-size:13px;line-height:19px;color:#2e3334;-webkit-text-stroke:0.2px #2e3334;letter-spacing:0px;white-space:nowrap;text-decoration:underline;text-decoration-color:#6f7375;text-decoration-thickness:1px;text-underline-offset:1.6px;">Carol<br>Coughlin</div>
<div class="abs" style="left:635.2px;top:661.1px;font-size:13px;line-height:16px;color:#2e3334;-webkit-text-stroke:0.2px #2e3334;letter-spacing:0px;white-space:nowrap;">1 - Critical</div>
<div class="abs" style="left:726.8px;top:661.1px;font-size:13px;line-height:16px;color:#2e3334;-webkit-text-stroke:0.2px #2e3334;letter-spacing:0px;white-space:nowrap;">In Progress</div>
<div class="abs" style="left:932.7px;top:661.1px;font-size:13px;line-height:16px;color:#2e3334;-webkit-text-stroke:0.2px #2e3334;letter-spacing:0px;white-space:nowrap;text-decoration:underline;text-decoration-color:#6f7375;text-decoration-thickness:1px;text-underline-offset:1.6px;">Service Desk</div>
<svg style="left:0;top:0" width="1073" height="695"><circle cx="83.10000000000002" cy="195.2" r="9.2" fill="none" stroke="#3d8c78" stroke-width="1.6"/><circle cx="83.10000000000002" cy="190.6" r="1.1" fill="#3d8c78"/><rect x="82.10000000000002" y="193.9" width="2" height="6.8" fill="#3d8c78"/><circle cx="83.10000000000002" cy="248.0" r="9.2" fill="none" stroke="#3d8c78" stroke-width="1.6"/><circle cx="83.10000000000002" cy="243.4" r="1.1" fill="#3d8c78"/><rect x="82.10000000000002" y="246.7" width="2" height="6.8" fill="#3d8c78"/><circle cx="83.10000000000002" cy="300.8" r="9.2" fill="none" stroke="#3d8c78" stroke-width="1.6"/><circle cx="83.10000000000002" cy="296.2" r="1.1" fill="#3d8c78"/><rect x="82.10000000000002" y="299.5" width="2" height="6.8" fill="#3d8c78"/><circle cx="624.8" cy="299.1" r="4" fill="#f05545"/><circle cx="83.10000000000002" cy="353.6" r="9.2" fill="none" stroke="#3d8c78" stroke-width="1.6"/><circle cx="83.10000000000002" cy="349.0" r="1.1" fill="#3d8c78"/><rect x="82.10000000000002" y="352.3" width="2" height="6.8" fill="#3d8c78"/><circle cx="83.10000000000002" cy="406.4" r="9.2" fill="none" stroke="#3d8c78" stroke-width="1.6"/><circle cx="83.10000000000002" cy="401.8" r="1.1" fill="#3d8c78"/><rect x="82.10000000000002" y="405.1" width="2" height="6.8" fill="#3d8c78"/><circle cx="83.10000000000002" cy="459.2" r="9.2" fill="none" stroke="#3d8c78" stroke-width="1.6"/><circle cx="83.10000000000002" cy="454.6" r="1.1" fill="#3d8c78"/><rect x="82.10000000000002" y="457.9" width="2" height="6.8" fill="#3d8c78"/><circle cx="624.8" cy="457.5" r="4" fill="#f05545"/><circle cx="83.10000000000002" cy="512.0" r="9.2" fill="none" stroke="#3d8c78" stroke-width="1.6"/><circle cx="83.10000000000002" cy="507.4" r="1.1" fill="#3d8c78"/><rect x="82.10000000000002" y="510.7" width="2" height="6.8" fill="#3d8c78"/><circle cx="83.10000000000002" cy="564.8" r="9.2" fill="none" stroke="#3d8c78" stroke-width="1.6"/><circle cx="83.10000000000002" cy="560.2" r="1.1" fill="#3d8c78"/><rect x="82.10000000000002" y="563.5" width="2" height="6.8" fill="#3d8c78"/><circle cx="83.10000000000002" cy="617.6" r="9.2" fill="none" stroke="#3d8c78" stroke-width="1.6"/><circle cx="83.10000000000002" cy="613.0" r="1.1" fill="#3d8c78"/><rect x="82.10000000000002" y="616.3" width="2" height="6.8" fill="#3d8c78"/><circle cx="83.10000000000002" cy="670.4" r="9.2" fill="none" stroke="#3d8c78" stroke-width="1.6"/><circle cx="83.10000000000002" cy="665.8" r="1.1" fill="#3d8c78"/><rect x="82.10000000000002" y="669.1" width="2" height="6.8" fill="#3d8c78"/><circle cx="624.8" cy="668.7" r="4" fill="#f05545"/></svg>
</div>
<div class="abs" style="left:826px;top:62px;width:530px;height:43px;background:#d92f3b;border-radius:4px;box-shadow:0 1px 3px rgba(0,0,0,.25)"></div>
<svg style="left:0;top:0" width="1384" height="120">
  <rect x="841.5" y="75.5" width="2.4" height="16.5" fill="#fff"/>
  <path d="M844 78.5 H849 L850 79.5 H855.3 V87 H850 L849 86 H844 Z" fill="#fff"/>
  <path d="M1329 78.2 L1340 88.9 M1340 78.2 L1329 88.9" stroke="#fbe3e5" stroke-width="1.8"/>
</svg>
<div class="abs" style="left:868px;top:75px;font-size:15.6px;line-height:18px;color:#fff;letter-spacing:0;white-space:nowrap">INC0000059 assigned to you: Unable to access team file share</div>

</div>
</body></html>
